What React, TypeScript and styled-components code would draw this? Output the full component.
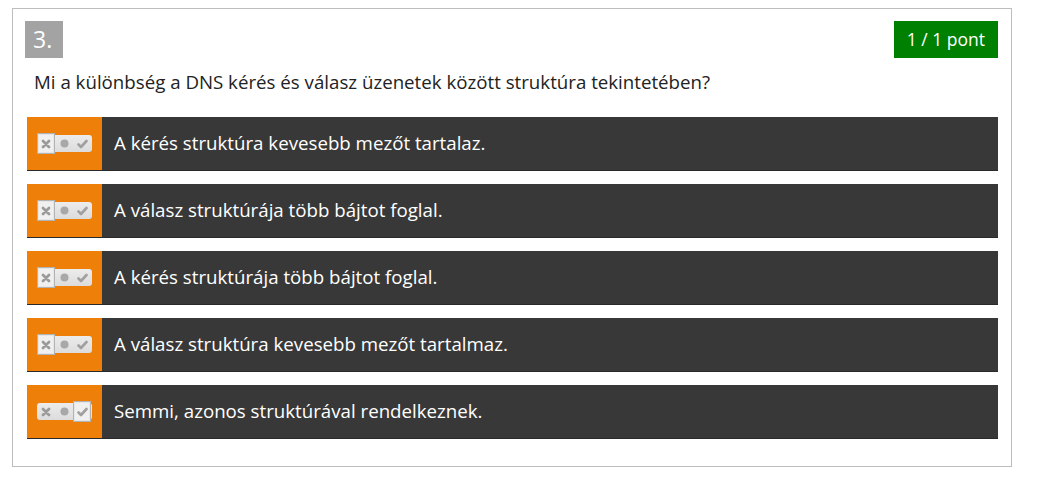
import React from 'react';
import styled, { createGlobalStyle } from 'styled-components';

const GlobalStyle = createGlobalStyle`
  body {
    margin: 0;
    background: #fff;
    font-family: 'Open Sans', 'Noto Sans', sans-serif;
  }
`;

const Card = styled.div`
  box-sizing: border-box;
  width: 1000px;
  margin: 8px 0 0 12px;
  border: 1px solid #bdbdbd;
  padding: 12px 13px 27px 12px;
`;

const Header = styled.div`
  display: flex;
  justify-content: space-between;
  align-items: flex-start;
`;

const Number = styled.div`
  width: 38px;
  height: 37px;
  background: #a3a3a3;
  color: #fff;
  font-size: 23px;
  line-height: 37px;
  padding-left: 8px;
  box-sizing: border-box;
`;

const Score = styled.div`
  height: 37px;
  line-height: 37px;
  padding: 0 13px;
  background: #008000;
  color: #fff;
  font-size: 17.5px;
`;

const Question = styled.p`
  margin: 11px 0 22px 9px;
  font-size: 18.7px;
  color: #222;
  line-height: 26px;
`;

const Answers = styled.div`
  display: flex;
  flex-direction: column;
  gap: 13px;
  padding-left: 2px;
`;

const Row = styled.div`
  display: flex;
  height: 54px;
  box-sizing: border-box;
  border-bottom: 1px solid #2a2a2a;
  background: #383838;
`;

const Marker = styled.div`
  width: 75px;
  flex: none;
  background: #ee7f08;
  display: flex;
  align-items: center;
  padding-left: 10px;
  box-sizing: border-box;
`;

const Toggle = styled.div`
  display: flex;
  align-items: center;
  width: 55px;
  height: 17px;
  border-radius: 3px;
  background: linear-gradient(#ececec, #dcdcdc);
`;

const Slot = styled.div<{ active?: boolean }>`
  width: 18px;
  height: ${p => (p.active ? '21px' : '17px')};
  box-sizing: border-box;
  display: flex;
  align-items: center;
  justify-content: center;
  border: ${p => (p.active ? '1px solid #b3b3b3' : 'none')};
  background: ${p => (p.active ? '#f0f0f0' : 'transparent')};
  box-shadow: ${p => (p.active ? '0 0 0 1px #e6e6e6 inset' : 'none')};
`;

const Label = styled.div`
  display: flex;
  align-items: center;
  padding: 0 0 3px 12px;
  color: #fff;
  font-size: 18.7px;
`;

const Cross = () => (
  <svg width="10" height="10" viewBox="0 0 10 10">
    <path d="M2 2 L8 8 M8 2 L2 8" stroke="#9a9a9a" strokeWidth="2.8" strokeLinecap="round" />
  </svg>
);

const Dot = () => (
  <svg width="9" height="9" viewBox="0 0 9 9">
    <circle cx="4.5" cy="4.5" r="4" fill="#a8a8a8" />
  </svg>
);

const Check = () => (
  <svg width="11" height="10" viewBox="0 0 11 10">
    <path d="M1.5 5.5 L4 8 L9.5 2" stroke="#a0a0a0" strokeWidth="2.6" fill="none" strokeLinecap="round" strokeLinejoin="round" />
  </svg>
);

const answers: { text: string; state: 'no' | 'yes' }[] = [
  { text: 'A kérés struktúra kevesebb mezőt tartalaz.', state: 'no' },
  { text: 'A válasz struktúrája több bájtot foglal.', state: 'no' },
  { text: 'A kérés struktúrája több bájtot foglal.', state: 'no' },
  { text: 'A válasz struktúra kevesebb mezőt tartalmaz.', state: 'no' },
  { text: 'Semmi, azonos struktúrával rendelkeznek.', state: 'yes' },
];

export default function App() {
  return (
    <>
      <GlobalStyle />
      <Card>
        <Header>
          <Number>3.</Number>
          <Score>1 / 1 pont</Score>
        </Header>
        <Question>Mi a különbség a DNS kérés és válasz üzenetek között struktúra tekintetében?</Question>
        <Answers>
          {answers.map(a => (
            <Row key={a.text}>
              <Marker>
                <Toggle>
                  <Slot active={a.state === 'no'}><Cross /></Slot>
                  <Slot><Dot /></Slot>
                  <Slot active={a.state === 'yes'}><Check /></Slot>
                </Toggle>
              </Marker>
              <Label>{a.text}</Label>
            </Row>
          ))}
        </Answers>
      </Card>
    </>
  );
}
